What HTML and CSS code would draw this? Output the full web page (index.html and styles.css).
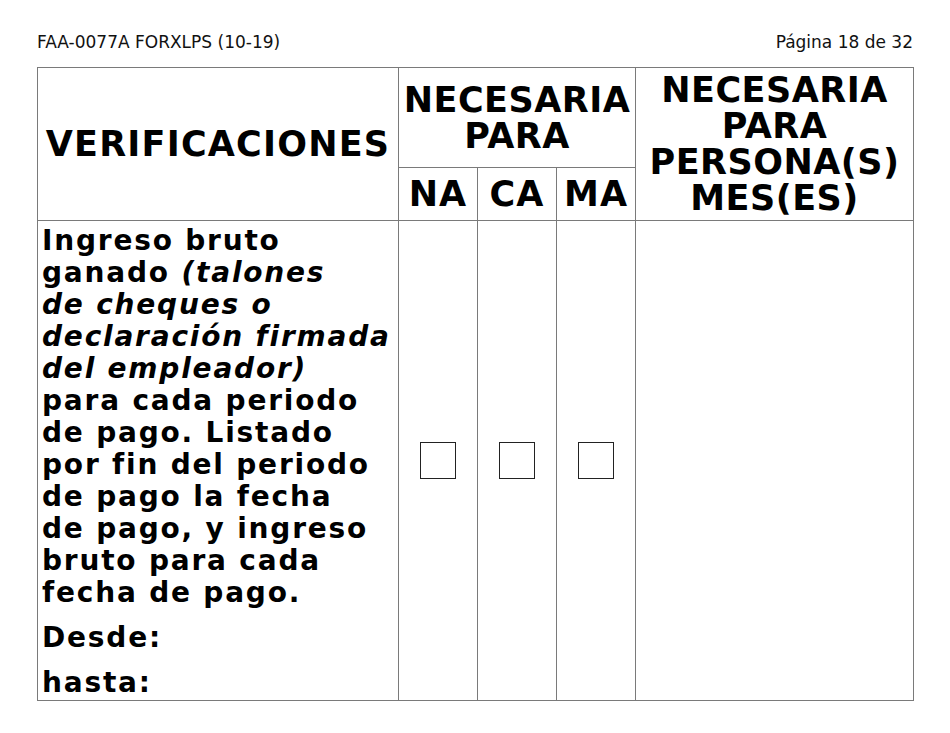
FILE: index.html
```html
<!DOCTYPE html>
<html lang="es">
<head>
<meta charset="utf-8">
<title>FAA-0077A</title>
<link rel="stylesheet" href="styles.css">
</head>
<body>
<div class="page">
  <div class="topline">
    <span>FAA-0077A FORXLPS (10-19)</span>
    <span>Página 18 de 32</span>
  </div>
  <table class="grid">
    <colgroup>
      <col class="c1"><col class="c2"><col class="c2"><col class="c2"><col class="c5">
    </colgroup>
    <tr class="h1">
      <th rowspan="2" class="hv">VERIFICACIONES</th>
      <th colspan="3" class="hn">NECESARIA<br>PARA</th>
      <th rowspan="2" class="hp">NECESARIA<br>PARA<br>PERSONA(S)<br>MES(ES)</th>
    </tr>
    <tr class="h2">
      <th class="hs">NA</th>
      <th class="hs">CA</th>
      <th class="hs">MA</th>
    </tr>
    <tr class="body">
      <td class="desc">
        <p class="para">Ingreso bruto<br>ganado <em>(talones<br>de cheques o<br>declaración firmada<br>del empleador)</em><br>para cada periodo<br>de pago. Listado<br>por fin del periodo<br>de pago la fecha<br>de pago, y ingreso<br>bruto para cada<br>fecha de pago.</p>
        <p class="para">Desde:</p>
        <p class="para">hasta:</p>
      </td>
      <td class="chk"><span class="box"></span></td>
      <td class="chk"><span class="box"></span></td>
      <td class="chk"><span class="box"></span></td>
      <td></td>
    </tr>
  </table>
</div>
</body>
</html>
```
FILE: styles.css
```css
html, body {
  margin: 0;
  padding: 0;
  background: #fff;
}
body {
  font-family: "DejaVu Sans", Verdana, sans-serif;
  color: #000;
}
.page {
  width: 876px;
  padding: 32px 0 0 37px;
}
.topline {
  display: flex;
  justify-content: space-between;
  font-size: 17px;
  line-height: 20px;
  color: #111;
  margin-bottom: 15px;
}
.grid {
  border-collapse: collapse;
  width: 876px;
  table-layout: fixed;
}
.c1 { width: 361px; }
.c2 { width: 79px; }
.c5 { width: 278px; }
.grid th, .grid td {
  border: 1px solid #7a7a7a;
  padding: 0;
}
.grid th {
  font-weight: bold;
  font-size: 35px;
  line-height: 36px;
  text-align: center;
  vertical-align: middle;
  letter-spacing: 0.5px;
}
.h1 { height: 100px; }
.h2 { height: 53px; }
.hv { letter-spacing: 1.2px !important; }
.hs { letter-spacing: 1px !important; }
.body { height: 480px; }
.desc {
  vertical-align: top;
  padding: 4px 2px 0 4px !important;
  font-weight: bold;
  font-size: 28px;
  line-height: 32px;
  letter-spacing: 1.8px;
  white-space: nowrap;
}
.desc em { font-style: italic; }
.para { margin: 0 0 13px 0; }
.para:last-child { margin-bottom: 0; }
.chk {
  text-align: center;
  vertical-align: middle;
}
.box {
  display: inline-block;
  width: 34px;
  height: 35px;
  border: 1.5px solid #222;
  vertical-align: middle;
}
```
